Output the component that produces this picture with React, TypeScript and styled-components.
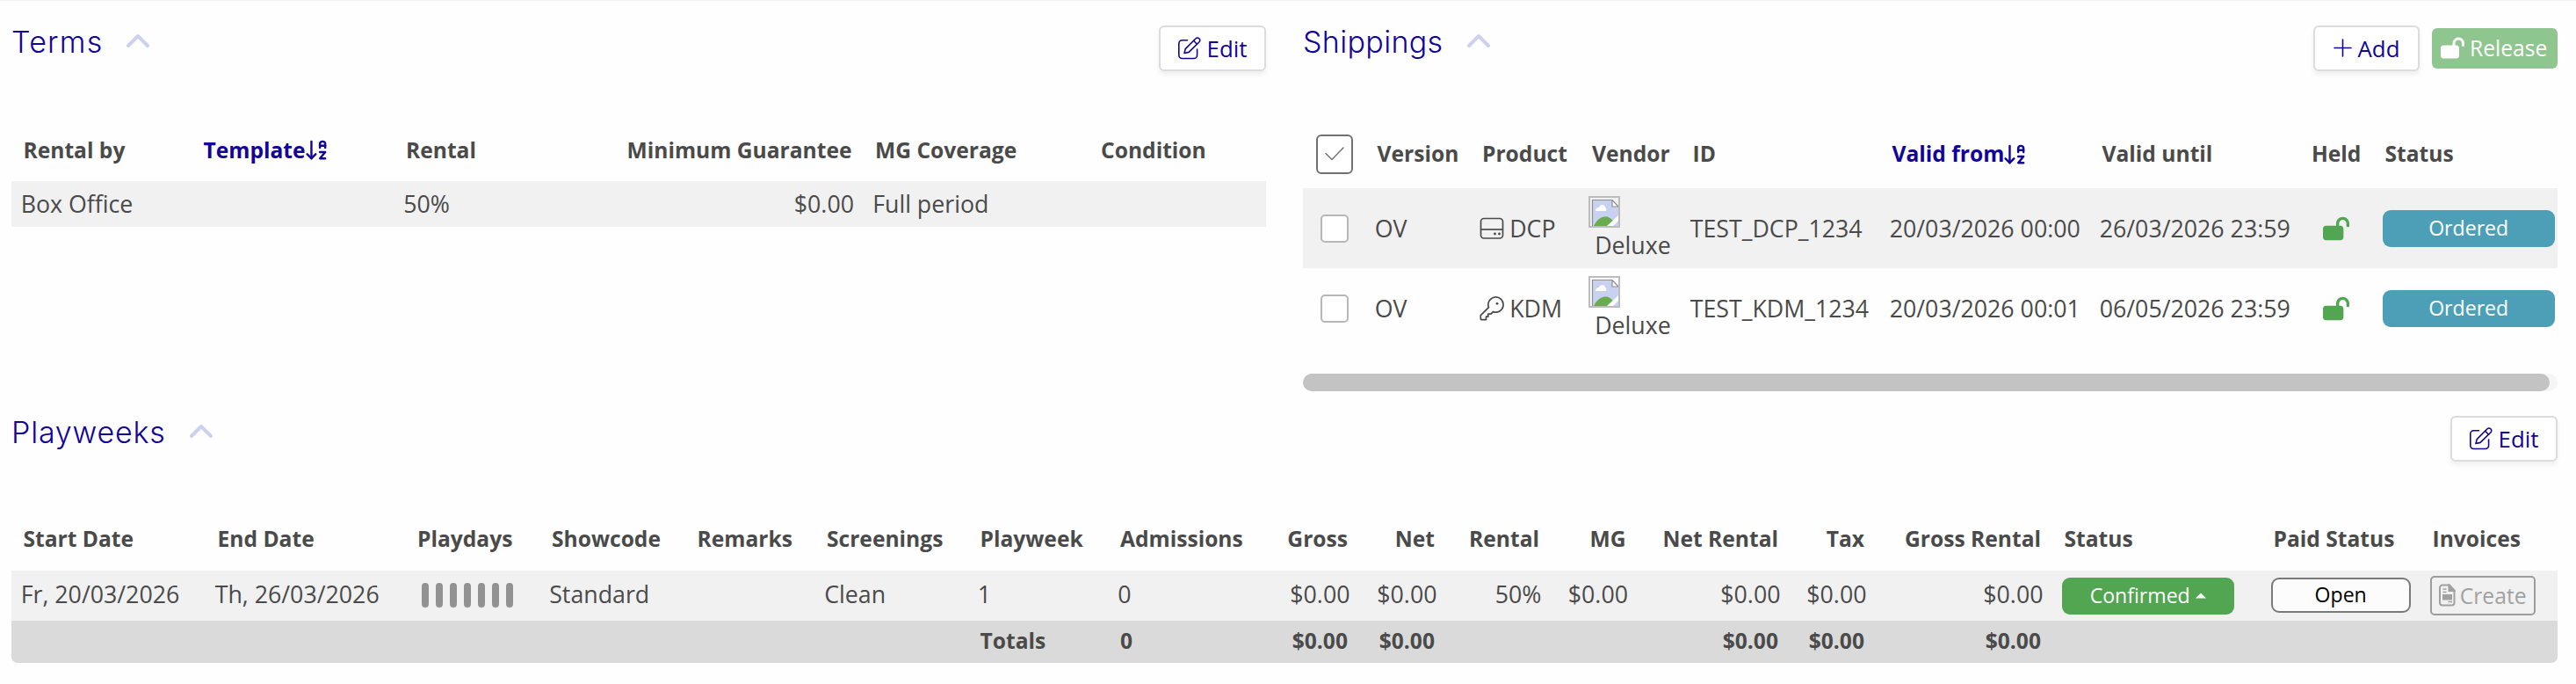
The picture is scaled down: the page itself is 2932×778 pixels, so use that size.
import React from 'react';
import styled, { createGlobalStyle, css } from 'styled-components';
import { ArrowDownAZ } from 'lucide-react';
import { FaLockOpen } from 'react-icons/fa6';

const NAVY = '#120399';
const TEXT = '#4a4a4a';
const GREEN = '#52a551';

const GlobalStyle = createGlobalStyle`
  *, *::before, *::after { box-sizing: border-box; }
  body {
    margin: 0;
    background: #fefefe;
    color: ${TEXT};
    font-family: "Open Sans", "Noto Sans", sans-serif;
    font-size: 26.75px;
  }
`;

const Page = styled.main`
  width: 2932px;
  height: 778px;
  padding: 0 21px 0 13px;
  border-top: 1px solid #f3f3f3;
  overflow: hidden;
`;

const TopPanels = styled.div`
  display: grid;
  grid-template-columns: 1428px 1428px;
  gap: 42px;
  height: 444px;
`;

const Section = styled.section`
  display: flex;
  flex-direction: column;
  min-width: 0;
`;

const SectionHeader = styled.header<{ $height: number }>`
  display: flex;
  justify-content: space-between;
  align-items: flex-start;
  flex: none;
  height: ${p => p.$height}px;
  padding-top: 28px;
`;

const Title = styled.h2<{ $spacing: number }>`
  display: flex;
  align-items: flex-start;
  margin: -1px 0 0;
  color: ${NAVY};
  font-family: Inter, sans-serif;
  font-size: 34px;
  font-weight: 300;
  line-height: 39px;
  letter-spacing: ${p => p.$spacing}px;

  svg {
    margin: 10px 0 0 26px;
  }
`;

const Actions = styled.div`
  display: flex;
  align-items: flex-start;
  gap: 14px;
`;

const OutlineButton = styled.button<{ $width: number }>`
  display: flex;
  align-items: center;
  justify-content: center;
  gap: 7px;
  width: ${p => p.$width}px;
  height: 52px;
  padding: 0 0 1px;
  border: 2px solid #dcdcdc;
  border-radius: 6px;
  background: #fff;
  box-shadow: 0 4px 5px rgba(0, 0, 0, 0.06);
  color: ${NAVY};
  font: 400 25.8px "Open Sans", sans-serif;
`;

const ReleaseButton = styled.button`
  display: flex;
  align-items: center;
  gap: 6px;
  width: 143px;
  height: 46px;
  margin-top: 3px;
  padding: 0 0 2px 10px;
  border: 0;
  border-radius: 6px;
  background: #8fc58f;
  color: #fff;
  font: 400 24.6px "Open Sans", sans-serif;
`;

const Table = styled.table`
  width: 100%;
  table-layout: fixed;
  border-collapse: separate;
  border-spacing: 0;
`;

const HeadRow = styled.tr<{ $height: number }>`
  height: ${p => p.$height}px;
`;

const BodyRow = styled.tr<{ $height: number; $shaded?: boolean }>`
  height: ${p => p.$height}px;
  background: ${p => (p.$shaded ? '#f1f1f1' : 'transparent')};
`;

const TotalsRow = styled.tr`
  height: 48px;
  background: #dadada;

  td:first-child { border-bottom-left-radius: 7px; }
  td:last-child { border-bottom-right-radius: 7px; }
`;

type CellProps = { $align?: 'left' | 'right' | 'center'; $lift?: number };

const boldCell = css<CellProps>`
  padding: 0 13px ${p => p.$lift ?? 0}px 13.5px;
  text-align: ${p => p.$align ?? 'left'};
  font-size: 24.6px;
  font-weight: 700;
  line-height: 34px;
  white-space: nowrap;
`;

const Th = styled.th<CellProps & { $sorted?: boolean }>`
  ${boldCell}
  color: ${p => (p.$sorted ? NAVY : TEXT)};
`;

const TotalCell = styled.td<CellProps>`
  ${boldCell}
`;

const Td = styled.td<CellProps>`
  padding: 0 10.5px ${p => p.$lift ?? 0}px 10.7px;
  text-align: ${p => p.$align ?? 'left'};
  line-height: 36px;
  white-space: nowrap;
`;

const SortLabel = styled.span`
  display: flex;
  align-items: center;

  svg { margin: 0 -4px 0 -2px; }
`;

const SelectAll = styled.button`
  display: flex;
  align-items: center;
  justify-content: center;
  width: 42px;
  height: 45px;
  margin: 0 auto;
  padding: 0 0 2px;
  border: 2px solid #707070;
  border-radius: 6px;
  background: #fff;
`;

const Checkbox = styled.span`
  display: block;
  width: 32px;
  height: 32px;
  margin: 1px auto 0;
  border: 2px solid #b7b7b7;
  border-radius: 5px;
  background: #fff;
`;

const Product = styled.span`
  display: flex;
  align-items: center;
  gap: 6px;
`;

const Vendor = styled.span`
  display: flex;
  flex-direction: column;
  gap: 2px;
  margin-left: -1px;
`;

const VendorName = styled.span`
  padding-left: 7px;
`;

const Held = styled.span`
  display: flex;
  justify-content: center;
  color: ${GREEN};
`;

const StatusBadge = styled.span<{ $color: string }>`
  display: flex;
  align-items: center;
  justify-content: center;
  gap: 6px;
  width: 196px;
  height: 42px;
  border-radius: 9px;
  background: ${p => p.$color};
  color: #fff;
  font-size: 23.1px;
  line-height: 30px;
`;

const StatusText = styled.span<{ $lift: number }>`
  padding-bottom: ${p => p.$lift}px;
`;

const PaidBadge = styled.span`
  display: flex;
  align-items: center;
  justify-content: center;
  width: 159px;
  height: 40px;
  padding-bottom: 3px;
  margin: -1px 0 0;
  border: 2px solid #7a7a7a;
  border-radius: 9px;
  background: #fcfcfc;
  color: #000;
  font-size: 23.1px;
`;

const CreateButton = styled.button`
  display: flex;
  align-items: center;
  gap: 5px;
  width: 120px;
  height: 45px;
  padding: 0 0 1px 8px;
  border: 2px solid #9c9c9c;
  border-radius: 5px;
  background: transparent;
  color: #a1a1a1;
  font: 400 24.7px "Open Sans", sans-serif;
`;

const Playdays = styled.span`
  display: flex;
  gap: 8px;
  margin: 1px 0 0 8px;
`;

const Day = styled.span`
  width: 8px;
  height: 28px;
  border-radius: 4px;
  background: #929292;
`;

const ScrollTrack = styled.div`
  height: 20px;
  margin-top: 29px;
  border-radius: 10px;
  background: #f6f6f6;
`;

const ScrollThumb = styled.div`
  width: 1419px;
  height: 20px;
  border-radius: 10px;
  background: #c3c3c3;
`;

const Chevron = () => (
  <svg width="28" height="18" viewBox="0 0 28 18" fill="none" stroke="#ccd1ed" strokeWidth="4" strokeLinecap="round" strokeLinejoin="round">
    <path d="M3 14 14 3l11 11" />
  </svg>
);

const EditIcon = () => (
  <svg width="26" height="26" viewBox="0 0 26 26" fill="none" stroke="currentColor" strokeWidth="1.6" strokeLinecap="round" strokeLinejoin="round">
    <path d="M10.5 3.7H4.6A3.8 3.8 0 0 0 .8 7.5V20.7a3.8 3.8 0 0 0 3.8 3.8H17.8a3.8 3.8 0 0 0 3.8-3.8V14" />
    <path d="M7 18.5 8.2 13.6 20.1 1.8a2.6 2.6 0 0 1 3.7 0l.2.2a2.6 2.6 0 0 1 0 3.7L12.1 17.4Z" />
    <path d="m17.6 4.3 3.9 3.9" />
  </svg>
);

const PlusIcon = () => (
  <svg width="21" height="21" viewBox="0 0 21 21" fill="none" stroke="currentColor" strokeWidth="1.6" strokeLinecap="round">
    <path d="M10.5 1v19M1 10.5h19" />
  </svg>
);

const CheckIcon = () => (
  <svg width="24" height="18" viewBox="0 0 24 18" fill="none" stroke="#707070" strokeWidth="1.4" strokeLinecap="round" strokeLinejoin="round">
    <path d="m2 8.5 7 7L22 2" />
  </svg>
);

const DriveIcon = () => (
  <svg width="28" height="26" viewBox="0 0 28 26" fill="none" stroke={TEXT} strokeWidth="1.7">
    <rect x="1.5" y="1.5" width="25" height="22.5" rx="3.5" />
    <path d="M1.5 14h25" />
    <circle cx="17.5" cy="19" r="1.4" fill={TEXT} stroke="none" />
    <circle cx="22.5" cy="19" r="1.4" fill={TEXT} stroke="none" />
  </svg>
);

const KeyIcon = () => (
  <svg width="28" height="28" viewBox="0 0 28 28" fill="none" stroke={TEXT} strokeWidth="1.7" strokeLinejoin="round">
    <path d="M10.4 12.6A8.6 8.6 0 1 1 15.4 17.6L12.9 20.1H9.8V23.2H7.5V26.6H2.2A.9.9 0 0 1 1.3 25.7V21.7Z" />
    <circle cx="20" cy="8.3" r="1.4" fill={TEXT} stroke="none" />
  </svg>
);

const MissingImage = () => (
  <svg width="36" height="36" viewBox="0 0 36 36">
    <path d="M4.5 34V4.5H27.5L34 11V34Z" fill="#c8d1f0" />
    <path d="M6 34C10 26 15 23.5 19.5 23.5S26 26 29 29L24 34Z" fill="#68ac50" />
    <path d="M21 34 34 22V28L28 34Z" fill="#fff" />
    <path d="M8 17C8 14 10 13 12 13c1-4 6-4 7-.5 1.5 1 1.5 3 1 4.5Z" fill="#fff" />
    <path d="M27 4.5V12H34Z" fill="#fff" />
    <path d="M4.5 34V4.5H27L34 12H27V4.5" fill="none" stroke="#8f8f8f" strokeWidth="1.2" />
    <rect x="1" y="1" width="34" height="34" fill="none" stroke="#bcbcbc" strokeWidth="2" />
  </svg>
);

const InvoiceIcon = () => (
  <svg width="19" height="26" viewBox="0 0 19 26" fill="none" stroke="currentColor" strokeWidth="2">
    <path d="M4 1.5h8l5.5 6V21.5a3 3 0 0 1-3 3H4a3 3 0 0 1-3-3V4.5a3 3 0 0 1 3-3Z" strokeLinejoin="round" />
    <path d="M11.5 1.5V8h6Z" fill="currentColor" />
    <path d="M4.5 6h4M4.5 9.5h4M10.5 20.5h4.5" strokeWidth="1.5" />
    <rect x="5" y="13" width="9" height="4.5" fill="currentColor" />
  </svg>
);

const CaretUp = () => (
  <svg width="12" height="7" viewBox="0 0 12 7" fill="currentColor">
    <path d="M0 6.5 6 .5l6 6Z" />
  </svg>
);

const Columns = ({ widths }: { widths: number[] }) => (
  <colgroup>
    {widths.map((width, i) => <col key={i} width={width} />)}
  </colgroup>
);

const SortedBy = ({ label }: { label: string }) => (
  <SortLabel>
    {label}
    <ArrowDownAZ size={29} strokeWidth={2} />
  </SortLabel>
);

const EditButton = () => (
  <OutlineButton $width={122}><EditIcon />Edit</OutlineButton>
);

const shippings = [
  { product: 'DCP', Icon: DriveIcon, id: 'TEST_DCP_1234', from: '20/03/2026 00:00', until: '26/03/2026 23:59' },
  { product: 'KDM', Icon: KeyIcon, id: 'TEST_KDM_1234', from: '20/03/2026 00:01', until: '06/05/2026 23:59' },
];

const Terms = () => (
  <Section>
    <SectionHeader $height={134}>
      <Title $spacing={1.2}>Terms<Chevron /></Title>
      <EditButton />
    </SectionHeader>
    <Table>
      <Columns widths={[205, 230.5, 251.5, 282.5, 257, 201.5]} />
      <thead>
        <HeadRow $height={71}>
          <Th>Rental by</Th>
          <Th $sorted><SortedBy label="Template" /></Th>
          <Th>Rental</Th>
          <Th $align="right">Minimum Guarantee</Th>
          <Th>MG Coverage</Th>
          <Th>Condition</Th>
        </HeadRow>
      </thead>
      <tbody>
        <BodyRow $height={52} $shaded>
          <Td $lift={1}>Box Office</Td>
          <Td />
          <Td $lift={1}>50%</Td>
          <Td $lift={1} $align="right">$0.00</Td>
          <Td $lift={1}>Full period</Td>
          <Td />
        </BodyRow>
      </tbody>
    </Table>
  </Section>
);

const Shippings = () => (
  <Section>
    <SectionHeader $height={136}>
      <Title $spacing={0.35}>Shippings<Chevron /></Title>
      <Actions>
        <OutlineButton $width={121}><PlusIcon />Add</OutlineButton>
        <ReleaseButton><FaLockOpen size={27} />Release</ReleaseButton>
      </Actions>
    </SectionHeader>
    <Table>
      <Columns widths={[71, 119.5, 125, 114.5, 227, 239, 238.5, 83.5, 210]} />
      <thead>
        <HeadRow $height={77}>
          <Td as="th"><SelectAll><CheckIcon /></SelectAll></Td>
          <Th $lift={1}>Version</Th>
          <Th $lift={1}>Product</Th>
          <Th $lift={1}>Vendor</Th>
          <Th $lift={1}>ID</Th>
          <Th $lift={1} $sorted><SortedBy label="Valid from" /></Th>
          <Th $lift={1}>Valid until</Th>
          <Th $lift={1}>Held</Th>
          <Th $lift={1}>Status</Th>
        </HeadRow>
      </thead>
      <tbody>
        {shippings.map(({ product, Icon, id, from, until }, i) => (
          <BodyRow key={id} $height={91} $shaded={i === 0}>
            <Td><Checkbox /></Td>
            <Td>OV</Td>
            <Td><Product><Icon />{product}</Product></Td>
            <Td><Vendor><MissingImage /><VendorName>Deluxe</VendorName></Vendor></Td>
            <Td>{id}</Td>
            <Td>{from}</Td>
            <Td>{until}</Td>
            <Td><Held><FaLockOpen size={30} /></Held></Td>
            <Td><StatusBadge $color="#4d9fb8"><StatusText $lift={2}>Ordered</StatusText></StatusBadge></Td>
          </BodyRow>
        ))}
      </tbody>
    </Table>
    <ScrollTrack><ScrollThumb /></ScrollTrack>
  </Section>
);

const Playweeks = () => (
  <Section>
    <SectionHeader $height={132}>
      <Title $spacing={0.8}>Playweeks<Chevron /></Title>
      <EditButton />
    </SectionHeader>
    <Table>
      <Columns widths={[221, 227.5, 153, 165.5, 147.5, 174.5, 159.5, 176, 109.5, 99, 119, 98.5, 173.5, 98, 201, 238, 181, 156]} />
      <thead>
        <HeadRow $height={72}>
          <Th>Start Date</Th>
          <Th>End Date</Th>
          <Th>Playdays</Th>
          <Th>Showcode</Th>
          <Th>Remarks</Th>
          <Th>Screenings</Th>
          <Th>Playweek</Th>
          <Th>Admissions</Th>
          <Th $align="right">Gross</Th>
          <Th $align="right">Net</Th>
          <Th $align="right">Rental</Th>
          <Th $align="right">MG</Th>
          <Th $align="right">Net Rental</Th>
          <Th $align="right">Tax</Th>
          <Th $align="right">Gross Rental</Th>
          <Th>Status</Th>
          <Th>Paid Status</Th>
          <Th>Invoices</Th>
        </HeadRow>
      </thead>
      <tbody>
        <BodyRow $height={57} $shaded>
          <Td $lift={3}>Fr, 20/03/2026</Td>
          <Td $lift={3}>Th, 26/03/2026</Td>
          <Td $lift={2}><Playdays>{Array.from({ length: 7 }, (_, i) => <Day key={i} />)}</Playdays></Td>
          <Td $lift={3}>Standard</Td>
          <Td />
          <Td $lift={3}>Clean</Td>
          <Td $lift={3}>1</Td>
          <Td $lift={3}>0</Td>
          <Td $lift={3} $align="right">$0.00</Td>
          <Td $lift={3} $align="right">$0.00</Td>
          <Td $lift={3} $align="right">50%</Td>
          <Td $lift={3} $align="right">$0.00</Td>
          <Td $lift={3} $align="right">$0.00</Td>
          <Td $lift={3} $align="right">$0.00</Td>
          <Td $lift={3} $align="right">$0.00</Td>
          <Td><StatusBadge $color={GREEN}><StatusText $lift={1}>Confirmed</StatusText><CaretUp /></StatusBadge></Td>
          <Td><PaidBadge>Open</PaidBadge></Td>
          <Td><CreateButton><InvoiceIcon />Create</CreateButton></Td>
        </BodyRow>
        <TotalsRow>
          <TotalCell colSpan={6} />
          <TotalCell $lift={3}>Totals</TotalCell>
          <TotalCell $lift={3}>0</TotalCell>
          <TotalCell $lift={3} $align="right">$0.00</TotalCell>
          <TotalCell $lift={3} $align="right">$0.00</TotalCell>
          <TotalCell colSpan={2} />
          <TotalCell $lift={3} $align="right">$0.00</TotalCell>
          <TotalCell $lift={3} $align="right">$0.00</TotalCell>
          <TotalCell $lift={3} $align="right">$0.00</TotalCell>
          <TotalCell colSpan={2} />
          <TotalCell />
        </TotalsRow>
      </tbody>
    </Table>
  </Section>
);

export default function App() {
  return (
    <>
      <GlobalStyle />
      <Page>
        <TopPanels>
          <Terms />
          <Shippings />
        </TopPanels>
        <Playweeks />
      </Page>
    </>
  );
}
